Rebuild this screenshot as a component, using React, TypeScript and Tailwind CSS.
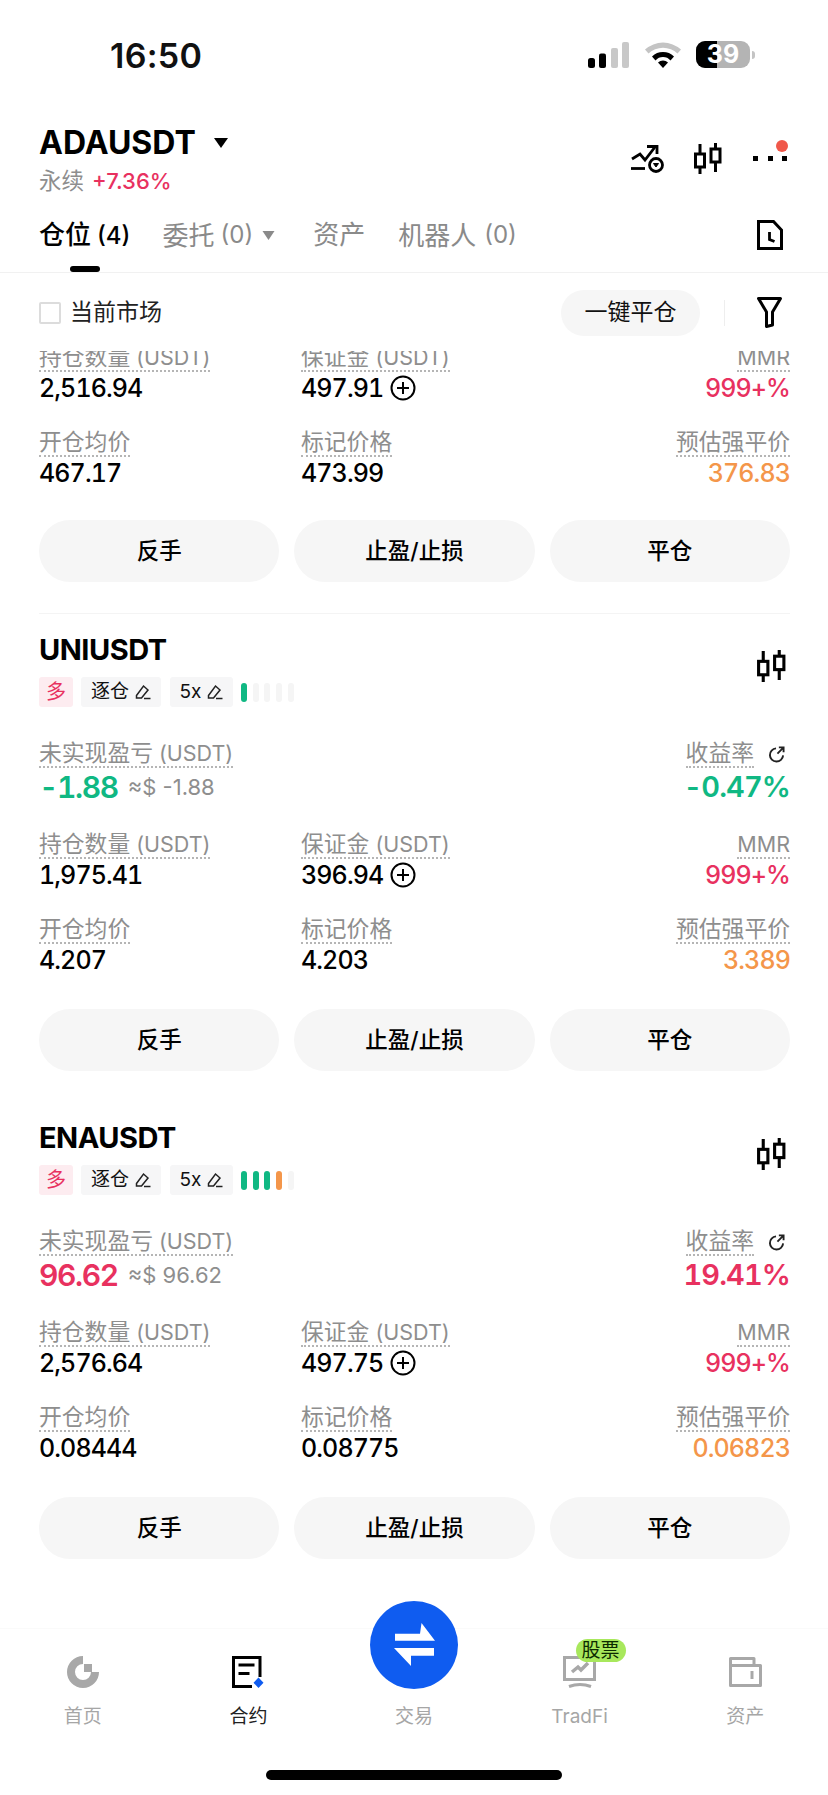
import React from 'react';

const PINK = 'text-[#e8315f]';
const GREEN = 'text-[#10b883]';
const ORANGE = 'text-[#f4964a]';

function CandleIcon({ className = '' }: { className?: string }) {
  return (
    <svg viewBox="0 0 28 31" className={className} fill="none" stroke="#000" strokeWidth="3">
      <path d="M6 1v10M6 24v7M21.500 0v6M21.500 19v10" />
      <rect x="1.500" y="11" width="9" height="13" />
      <rect x="17" y="6" width="9" height="13" />
    </svg>
  );
}

function PenIcon() {
  return (
    <svg viewBox="0 0 16 16" className="w-[16px] h-[16px]" fill="none" stroke="#222" strokeWidth="1.500">
      <path d="M1.500 11.500 8.500 2l4.500 4-6.500 8h-5z" />
      <path d="M9 14.500h6.500" />
    </svg>
  );
}

// dotted label, CJK runs larger than the latin unit beside them
function Label({ children, unit }: { children?: React.ReactNode; unit?: string }) {
  return (
    <span className="inline-block h-[28px] leading-[26px] text-[22.800px] text-[#8e8e8e] border-b-2 border-dotted border-[#b5b5b5] whitespace-nowrap">
      {children}
      {unit && <span className={`text-[21.500px] ${children ? 'ml-[6px]' : ''}`}>{unit}</span>}
    </span>
  );
}

function PlusCircle() {
  return (
    <svg viewBox="0 0 26 26" className="w-[26px] h-[26px] ml-[7px]" fill="none" stroke="#000" strokeWidth="2">
      <circle cx="13" cy="13" r="11.500" />
      <path d="M13 7v12M7 13h12" />
    </svg>
  );
}

function StatRow({
  left,
  leftUnit,
  leftValue,
  mid,
  midUnit,
  midValue,
  midPlus,
  right,
  rightUnit,
  rightValue,
  rightClass,
  className = '',
}: {
  left: string;
  leftUnit?: string;
  leftValue: string;
  mid: string;
  midUnit?: string;
  midValue: string;
  midPlus?: boolean;
  right?: string;
  rightUnit?: string;
  rightValue: string;
  rightClass: string;
  className?: string;
}) {
  return (
    <div className={`grid grid-cols-[262px_1fr_auto] ${className}`}>
      <div>
        <Label unit={leftUnit}>{left}</Label>
        <div className="h-[30px] mt-[1px] leading-[30px] text-[25px] font-medium tabular-nums tracking-[-0.900px] text-black">{leftValue}</div>
      </div>
      <div>
        <Label unit={midUnit}>{mid}</Label>
        <div className="flex items-center h-[30px] mt-[1px] leading-[30px] text-[25px] font-medium tabular-nums tracking-[-0.900px] text-black">
          {midValue}
          {midPlus && <PlusCircle />}
        </div>
      </div>
      <div className="text-right">
        <Label unit={rightUnit}>{right}</Label>
        <div className={`h-[30px] mt-[1px] leading-[30px] text-[25px] font-medium tabular-nums tracking-[-0.900px] ${rightClass}`}>{rightValue}</div>
      </div>
    </div>
  );
}

function Actions({ className = 'mt-[32px]' }: { className?: string }) {
  return (
    <div className={`flex gap-[15px] ${className}`}>
      {['反手', '止盈/止损', '平仓'].map((t) => (
        <div
          key={t}
          className="flex-1 h-[62px] rounded-full bg-[#f6f6f6] flex items-center justify-center text-[22.500px] font-medium text-black"
        >
          {t}
        </div>
      ))}
    </div>
  );
}

type Position = {
  symbol: string;
  bars: string[];
  pnl: string;
  pnlUsd: string;
  rate: string;
  tone: string;
  size: string;
  margin: string;
  entry: string;
  mark: string;
  liq: string;
};

const positions: Position[] = [
  {
    symbol: 'UNIUSDT',
    bars: ['bg-[#10b883]', 'bg-[#f5f5f5]', 'bg-[#f5f5f5]', 'bg-[#f5f5f5]', 'bg-[#f5f5f5]'],
    pnl: '-1.88',
    pnlUsd: '≈$ -1.88',
    rate: '-0.47%',
    tone: GREEN,
    size: '1,975.41',
    margin: '396.94',
    entry: '4.207',
    mark: '4.203',
    liq: '3.389',
  },
  {
    symbol: 'ENAUSDT',
    bars: ['bg-[#10b883]', 'bg-[#10b883]', 'bg-[#10b883]', 'bg-[#f4964a]', 'bg-[#f5f5f5]'],
    pnl: '96.62',
    pnlUsd: '≈$ 96.62',
    rate: '19.41%',
    tone: PINK,
    size: '2,576.64',
    margin: '497.75',
    entry: '0.08444',
    mark: '0.08775',
    liq: '0.06823',
  },
];

function PositionCard({ p }: { p: Position }) {
  return (
    <div className="pt-[18px] pb-[31px]">
      <div className="flex justify-between items-start">
        <div>
          <div className="h-[36px] leading-[36px] text-[29px] font-bold text-black tracking-[-0.500px]">{p.symbol}</div>
          <div className="flex items-center h-[30px] mt-[9px]">
            <div className={`w-[34px] h-[30px] rounded-[3px] bg-[#fdecf0] flex items-center justify-center text-[20px] ${PINK}`}>多</div>
            <div className="w-[80px] h-[30px] ml-[8px] rounded-[3px] bg-[#f6f6f7] flex items-center justify-center gap-[6px] text-[19px] text-[#111]">
              逐仓
              <PenIcon />
            </div>
            <div className="w-[63px] h-[30px] ml-[9px] rounded-[3px] bg-[#f6f6f7] flex items-center justify-center gap-[6px] text-[19px] text-[#111]">
              5x
              <PenIcon />
            </div>
            <div className="flex gap-[5.700px] ml-[8px]">
              {p.bars.map((b, i) => (
                <div key={i} className={`w-[6px] h-[19px] rounded-full ${b}`} />
              ))}
            </div>
          </div>
        </div>
        <CandleIcon className="w-[29px] h-[32px] mt-[18px] mr-[4px]" />
      </div>

      <div className="flex justify-between mt-[33px]">
        <div>
          <Label unit="(USDT)">未实现盈亏</Label>
          <div className="flex items-center h-[36px] mt-[1px]">
            <span className={`text-[30px] font-semibold tabular-nums tracking-[-1.400px] ${p.tone}`}>{p.pnl}</span>
            <span className="ml-[10px] text-[22px] text-[#8e8e8e]">{p.pnlUsd}</span>
          </div>
        </div>
        <div className="text-right">
          <div className="flex items-start justify-end gap-[14px] mr-[5px]">
            <Label>收益率</Label>
            <svg viewBox="0 0 18 18" className="w-[17px] h-[17px] mt-[6px]" fill="none" stroke="#222" strokeWidth="2">
              <path d="M8.500 2.500a7 7 0 1 0 7.500 7.500" />
              <path d="M10 8l6.500-6.500M11.500 1.500h5V6.500" />
            </svg>
          </div>
          <div className={`h-[36px] mt-[1px] leading-[36px] text-[29px] font-semibold tabular-nums tracking-[-0.900px] ${p.tone}`}>{p.rate}</div>
        </div>
      </div>

      <StatRow
        className="mt-[26px]"
        left="持仓数量"
        leftUnit="(USDT)"
        leftValue={p.size}
        mid="保证金"
        midUnit="(USDT)"
        midValue={p.margin}
        midPlus
        rightUnit="MMR"
        rightValue="999+%"
        rightClass={PINK}
      />
      <StatRow
        className="mt-[26px]"
        left="开仓均价"
        leftValue={p.entry}
        mid="标记价格"
        midValue={p.mark}
        right="预估强平价"
        rightValue={p.liq}
        rightClass={ORANGE}
      />
      <Actions className="mt-[34px]" />
    </div>
  );
}

function NavItem({
  label,
  active,
  children,
}: {
  label: string;
  active?: boolean;
  children?: React.ReactNode;
}) {
  return (
    <div className="flex-1 flex flex-col items-center pt-[27px]">
      <div className="relative h-[32px] w-[34px] flex items-center justify-center">{children}</div>
      <div className={`mt-[16px] h-[26px] leading-[26px] text-[19px] ${active ? 'text-[#222]' : 'text-[#a6a6a6]'}`}>{label}</div>
    </div>
  );
}

export default function App() {
  return (
    <div className="w-[828px] h-[1795px] overflow-hidden bg-white flex flex-col font-['Inter','Noto_Sans_CJK_SC',sans-serif]">
      {/* status bar */}
      <div className="h-[112px] shrink-0 flex items-start justify-between pl-[110px] pr-[73px] pt-[36px]">
        <div className="text-[34px] leading-[40px] font-semibold text-[#111] tracking-[0.300px]">16:50</div>
        <div className="flex items-center mt-[5px] h-[27px]">
          <svg viewBox="0 0 41 26" className="w-[41px] h-[26px]">
            <rect x="0" y="16" width="7" height="10" rx="2.500" fill="#000" />
            <rect x="11" y="11.500" width="7" height="14.500" rx="2" fill="#000" />
            <rect x="23" y="6" width="7" height="20" rx="2" fill="#c8c8c8" />
            <rect x="34" y="0" width="7" height="26" rx="2" fill="#c8c8c8" />
          </svg>
          <svg viewBox="0 0 38 26" className="w-[38px] h-[26px] ml-[15px]">
            <path d="M1 7.500a27 27 0 0 1 36 0l-3.500 4a21 21 0 0 0-29 0z" fill="#c4c4c4" />
            <path d="M8 14.500a16 16 0 0 1 22 0l-3.500 4a10 10 0 0 0-15 0z" fill="#000" />
            <path d="M14 20.500a7.500 7.500 0 0 1 10 0l-5 5.500z" fill="#000" />
          </svg>
          <div className="relative ml-[14px] w-[54px] h-[27px] rounded-[9px] bg-[#b4b4b4] overflow-hidden flex items-center justify-center">
            <div className="absolute left-0 top-0 bottom-0 w-[21px] bg-black" />
            <span className="relative text-[25px] leading-[27px] font-bold text-white">39</span>
          </div>
          <div className="w-[3px] h-[8px] ml-[2px] rounded-r-full bg-[#c4c4c4]" />
        </div>
      </div>

      {/* instrument header */}
      <div className="h-[98px] shrink-0 flex justify-between pl-[39px] pr-[40px]">
        <div>
          <div className="flex items-center h-[40px] mt-[11px]">
            <span className="text-[32px] font-bold text-black">ADAUSDT</span>
            <svg viewBox="0 0 14 10" className="w-[14px] h-[10px] ml-[18px]">
              <path d="M0 0h14L7 10z" fill="#000" />
            </svg>
          </div>
          <div className="flex items-center h-[28px] mt-[4px] text-[22.500px]">
            <span className="text-[#8e8e8e]">永续</span>
            <span className={`ml-[8px] text-[22px] font-medium ${PINK}`}>+7.36%</span>
          </div>
        </div>
        <div className="flex items-start mt-[31px]">
          <svg viewBox="0 0 33 28" className="w-[33px] h-[28px] mt-[2px]" fill="none" stroke="#000" strokeWidth="2.800">
            <path d="M1 14l8-5 5 6L24 2" />
            <path d="M16 1.500h10V9" />
            <path d="M0 23.500h14" />
            <circle cx="25" cy="20" r="6.500" />
            <path d="M22.500 18.500h5L25 22z" fill="#000" strokeWidth="1" />
          </svg>
          <CandleIcon className="w-[28px] h-[31px] ml-[30px]" />
          <div className="relative w-[35px] h-[31px] ml-[31px]">
            <div className="absolute left-0 top-[13px] w-[5px] h-[5px] bg-black" />
            <div className="absolute left-[15px] top-[13px] w-[5px] h-[5px] bg-black" />
            <div className="absolute left-[29px] top-[13px] w-[5px] h-[5px] bg-black" />
            <div className="absolute left-[23px] -top-[3px] w-[12px] h-[12px] rounded-full bg-[#f0584a]" />
          </div>
        </div>
      </div>

      {/* tabs */}
      <div className="h-[63px] shrink-0 border-b border-[#f1f1f1] flex justify-between pl-[39px] pr-[45px]">
        <div className="flex text-[26px] text-[#8a8a8a]">
          <div className="relative h-[62px] pt-[9px] leading-[32px] font-medium text-black whitespace-nowrap">
            仓位<span className="ml-[6px] text-[24px]">(4)</span>
            <div className="absolute left-[31px] bottom-0 w-[30px] h-[6px] rounded-full bg-black" />
          </div>
          <div className="flex items-center h-[50px] ml-[32px]">
            委托<span className="ml-[6px] text-[24px]">(0)</span>
            <svg viewBox="0 0 12 9" className="w-[13px] h-[9px] ml-[9px]">
              <path d="M0 0h12L6 9z" fill="#8a8a8a" />
            </svg>
          </div>
          <div className="h-[50px] leading-[50px] ml-[38px]">资产</div>
          <div className="flex items-center h-[50px] ml-[33px]">
            机器人<span className="ml-[8px] text-[24px]">(0)</span>
          </div>
        </div>
        <svg viewBox="0 0 26 30" className="w-[26px] h-[30px] mt-[10px]" fill="none" stroke="#000" strokeWidth="3">
          <path d="M1.500 1.500h15l8 8.500v18.500h-23z" />
          <path d="M12.500 12v7.500l5 2" strokeWidth="2.800" />
        </svg>
      </div>

      {/* filter row */}
      <div className="h-[78px] shrink-0 flex items-center pl-[39px] pr-[46px] pt-[1px]">
        <div className="w-[22px] h-[22px] rounded-[2px] border-2 border-[#dcdcdc]" />
        <div className="ml-[9px] text-[23px] text-[#222]">当前市场</div>
        <div className="ml-auto w-[139px] h-[46px] rounded-full bg-[#f6f6f6] flex items-center justify-center text-[23px] text-[#111]">
          一键平仓
        </div>
        <div className="w-px h-[26px] ml-[24px] bg-[#eeeeee]" />
        <svg viewBox="0 0 25 31" className="w-[25px] h-[31px] ml-[32px]" fill="none" stroke="#000" strokeWidth="3" strokeLinejoin="round">
          <path d="M1.500 1.500h22L15.500 15v13l-6 1.500V15z" />
        </svg>
      </div>

      {/* positions list, first card is scrolled part way out of view */}
      <div className="flex-1 min-h-0 overflow-hidden pl-[39px] pr-[38px]">
        <div className="-mt-[7px] pb-[31px] border-b border-[#f4f4f4]">
          <StatRow
            left="持仓数量"
            leftUnit="(USDT)"
            leftValue="2,516.94"
            mid="保证金"
            midUnit="(USDT)"
            midValue="497.91"
            midPlus
            rightUnit="MMR"
            rightValue="999+%"
            rightClass={PINK}
          />
          <StatRow
            className="mt-[26px]"
            left="开仓均价"
            leftValue="467.17"
            mid="标记价格"
            midValue="473.99"
            right="预估强平价"
            rightValue="376.83"
            rightClass={ORANGE}
          />
          <Actions />
        </div>
        {positions.map((p) => (
          <PositionCard key={p.symbol} p={p} />
        ))}
      </div>

      {/* bottom tab bar */}
      <div className="relative h-[167px] shrink-0 border-t border-[#fafafa] flex">
        <NavItem label="首页">
          <svg viewBox="0 0 32 32" className="w-[32px] h-[32px]" fill="#a8a8a8">
            <path d="M16 0v8a8 8 0 1 0 8 8h8A16 16 0 1 1 16 0z" />
            <path d="M17 8h8v8h-8z" />
          </svg>
        </NavItem>
        <NavItem label="合约" active>
          <svg viewBox="0 0 32 32" className="w-[32px] h-[32px]">
            <path d="M28 21V1.500H1.500v29H20" fill="none" stroke="#000" strokeWidth="3" />
            <path d="M6.500 7.500h16v3h-16zM6.500 16h11v3h-11z" fill="#000" />
            <path d="M26.500 21.500l5 5.250-5 5.250-5-5.250z" fill="#0f5cf0" />
          </svg>
        </NavItem>
        <NavItem label="交易" />
        <NavItem label="TradFi">
          <svg viewBox="0 0 34 32" className="w-[34px] h-[32px]" fill="none" stroke="#a8a8a8" strokeWidth="3">
            <path d="M1.500 1.500h30v22h-30z" />
            <path d="M9 16l6-5 3 3 7-7" strokeWidth="3.500" />
            <path d="M6 30.500q11-4 22 0" strokeWidth="3" />
          </svg>
          <div className="absolute left-[13px] -top-[17px] w-[50px] h-[23px] rounded-full bg-[#a8e85c] flex items-center justify-center text-[19px] leading-[23px] text-[#0c2a00]">
            股票
          </div>
        </NavItem>
        <NavItem label="资产">
          <svg viewBox="0 0 33 30" className="w-[33px] h-[30px]" fill="none" stroke="#a8a8a8" strokeWidth="3" strokeLinejoin="round">
            <path d="M1.500 28.500v-27H25v7h6.500v20z" />
            <path d="M1.500 8.500H25" />
            <path d="M23 14v8" />
          </svg>
        </NavItem>

        {/* centre trade button sits above the bar */}
        <div className="absolute left-[370px] -top-[28px] w-[88px] h-[88px] rounded-full bg-[#0f5cf0] flex items-center justify-center">
          <svg viewBox="0 0 41 44" className="w-[41px] h-[44px]" fill="#fff">
            <path d="M27.500 0 41 17.700H1v-7h25z" />
            <path d="M40 25v7.700H17V43L0 25z" />
          </svg>
        </div>

        <div className="absolute left-[266px] bottom-[15px] w-[296px] h-[10px] rounded-full bg-black" />
      </div>
    </div>
  );
}
